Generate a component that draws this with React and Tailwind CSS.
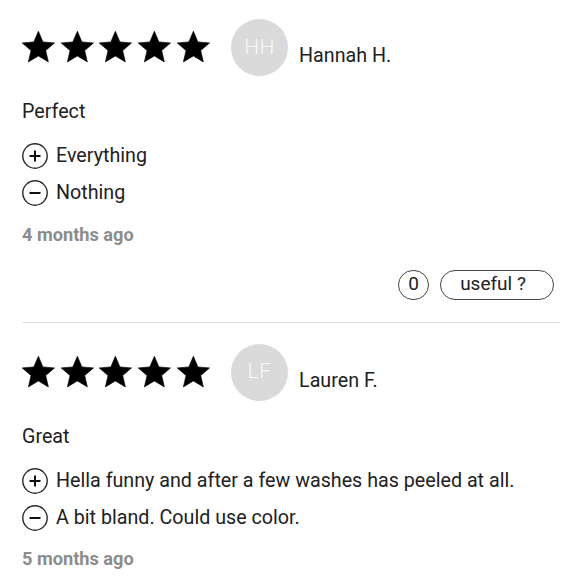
import React from "react";

const Star = () => (
  <svg viewBox="0 0 24 24" className="w-[38.75px] h-[38.75px] shrink-0" fill="#000">
    <path
      d="M12 17.27L18.18 21l-1.64-7.03L22 9.24l-7.19-.61L12 2 9.19 8.63 2 9.24l5.46 4.73L5.82 21z"
      stroke="#000"
      strokeWidth="0.4"
      strokeLinejoin="round"
    />
  </svg>
);

const SignIcon = ({ plus }) => (
  <svg viewBox="0 0 26 26" className="w-[26px] h-[26px] shrink-0">
    <circle cx="13" cy="13" r="12.2" fill="none" stroke="#2a2a2a" strokeWidth="1.4" />
    <line x1="7.5" y1="13" x2="18.5" y2="13" stroke="#111" strokeWidth="2" />
    {plus && <line x1="13" y1="7.5" x2="13" y2="18.5" stroke="#111" strokeWidth="2" />}
  </svg>
);

const Review = ({ initials, name, title, pro, con, date, last }) => (
  <div className={last ? "pt-[21px]" : ""}>
    <div className="flex items-center h-[57px]">
      <div className="flex ml-[-3.2px]">
        <Star />
        <Star />
        <Star />
        <Star />
        <Star />
      </div>
      <div className="ml-[18.5px] w-[57px] h-[57px] rounded-full bg-[#dadada] flex items-center justify-center text-[21px] text-[#f8f8f8] font-light tracking-[0.5px]">
        {initials}
      </div>
      <div className="ml-[11px] mt-[16px] text-[19.7px] leading-[27px] text-[#212121]">{name}</div>
    </div>
    <div className="mt-[22px] text-[19.7px] leading-[27px] text-[#212121]">{title}</div>
    <div className="mt-[12.5px]">
      <div className="flex items-center h-[37px] gap-[8px] text-[19.7px] text-[#212121]">
        <SignIcon plus />
        <span>{pro}</span>
      </div>
      <div className="flex items-center h-[37px] gap-[8px] text-[19.7px] text-[#212121]">
        <SignIcon />
        <span>{con}</span>
      </div>
    </div>
    <div className="mt-[11px] text-[18.2px] leading-[24px] font-bold text-[#8c8c8c]">{date}</div>
    <div className="mt-[23px] flex justify-end items-center pr-[6px] gap-[11px]">
      <div className="w-[31px] h-[30px] rounded-full border border-[#444] flex items-center justify-center text-[19px] text-[#212121]">
        0
      </div>
      <div className="w-[114px] h-[30px] rounded-full border border-[#444] flex items-center justify-center pr-[8px] text-[19px] text-[#212121]">
        useful ?
      </div>
    </div>
    <div className="mt-[22px] h-px bg-[#e2e2e2]" />
  </div>
);

export default function App() {
  return (
    <div
      className="w-[580px] min-h-[578px] bg-white pl-[22px] pr-[20px] pt-[19px] pb-[20px]"
      style={{ fontFamily: "Roboto, 'Noto Sans', sans-serif" }}
    >
      <Review
        initials="HH"
        name="Hannah H."
        title="Perfect"
        pro="Everything"
        con="Nothing"
        date="4 months ago"
      />
      <Review
        last
        initials="LF"
        name="Lauren F."
        title="Great"
        pro="Hella funny and after a few washes has peeled at all."
        con="A bit bland. Could use color."
        date="5 months ago"
      />
    </div>
  );
}
